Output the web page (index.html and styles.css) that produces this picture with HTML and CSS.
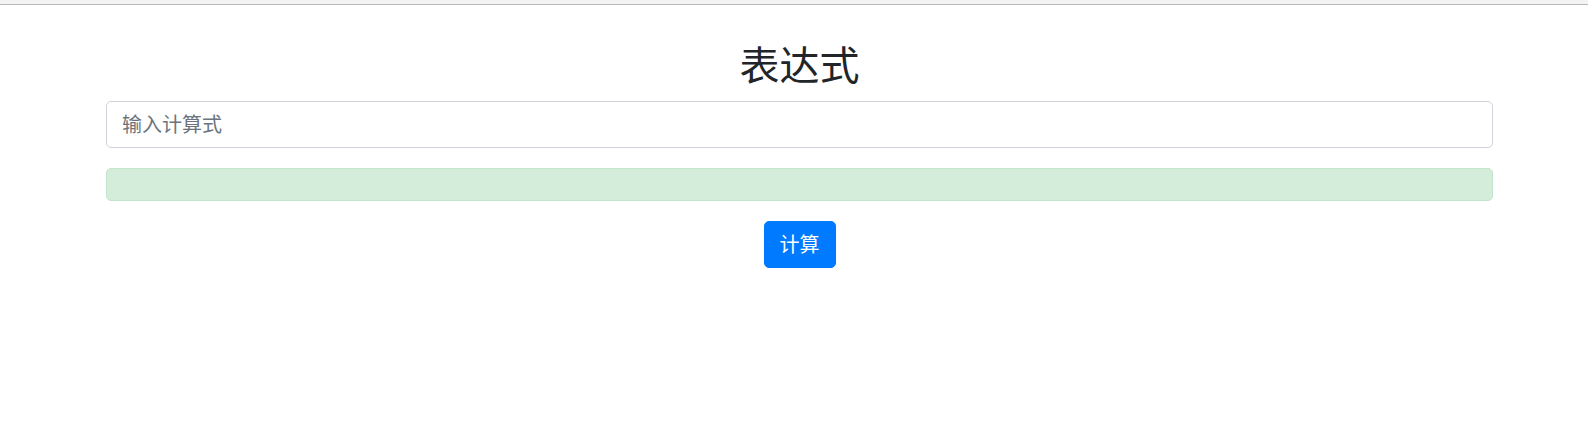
FILE: index.html
```html
<!DOCTYPE html>
<html lang="zh">
<head>
<meta charset="utf-8">
<title>表达式</title>
<link rel="stylesheet" href="styles.css">
</head>
<body>
<div class="topbar"></div>
<main class="container">
  <h2 class="title">表达式</h2>
  <div class="form-group">
    <input class="form-control" type="text" placeholder="输入计算式">
  </div>
  <div class="alert"></div>
  <div class="actions">
    <button class="btn" type="button">计算</button>
  </div>
</main>
</body>
</html>
```

FILE: styles.css
```css
* { box-sizing: border-box; }
html, body { margin: 0; padding: 0; background: #fff; }
body {
  font-family: "Segoe UI", Roboto, "Noto Sans CJK SC", sans-serif;
  font-size: 20px;
  line-height: 1.5;
  color: #212529;
}
.topbar {
  height: 5px;
  background: #f3f3f3;
  border-bottom: 1px solid #b9b9b9;
}
.container {
  width: 1387px;
  margin-left: 106px;
  padding-top: 38px;
}
.title {
  margin: 0 0 10px;
  font-size: 40px;
  font-weight: 400;
  line-height: 1.2;
  text-align: center;
  color: #212529;
}
.form-group { margin-bottom: 20px; }
.form-control {
  display: block;
  width: 100%;
  height: 47px;
  padding: 7.5px 15px;
  font-family: inherit;
  font-size: 20px;
  line-height: 1.5;
  color: #495057;
  background: #fff;
  border: 1px solid #ced4da;
  border-radius: 5px;
  outline: none;
}
.form-control::placeholder { color: #6c757d; opacity: 1; }
.alert {
  height: 33px;
  margin-bottom: 20px;
  background: #d4edda;
  border: 1px solid #c3e6cb;
  border-radius: 5px;
}
.actions {
  display: flex;
  justify-content: center;
}
.btn {
  height: 47px;
  padding: 7.5px 15px;
  font-family: inherit;
  font-size: 20px;
  line-height: 1.5;
  color: #fff;
  background: #007bff;
  border: 1px solid #007bff;
  border-radius: 5px;
}
```
